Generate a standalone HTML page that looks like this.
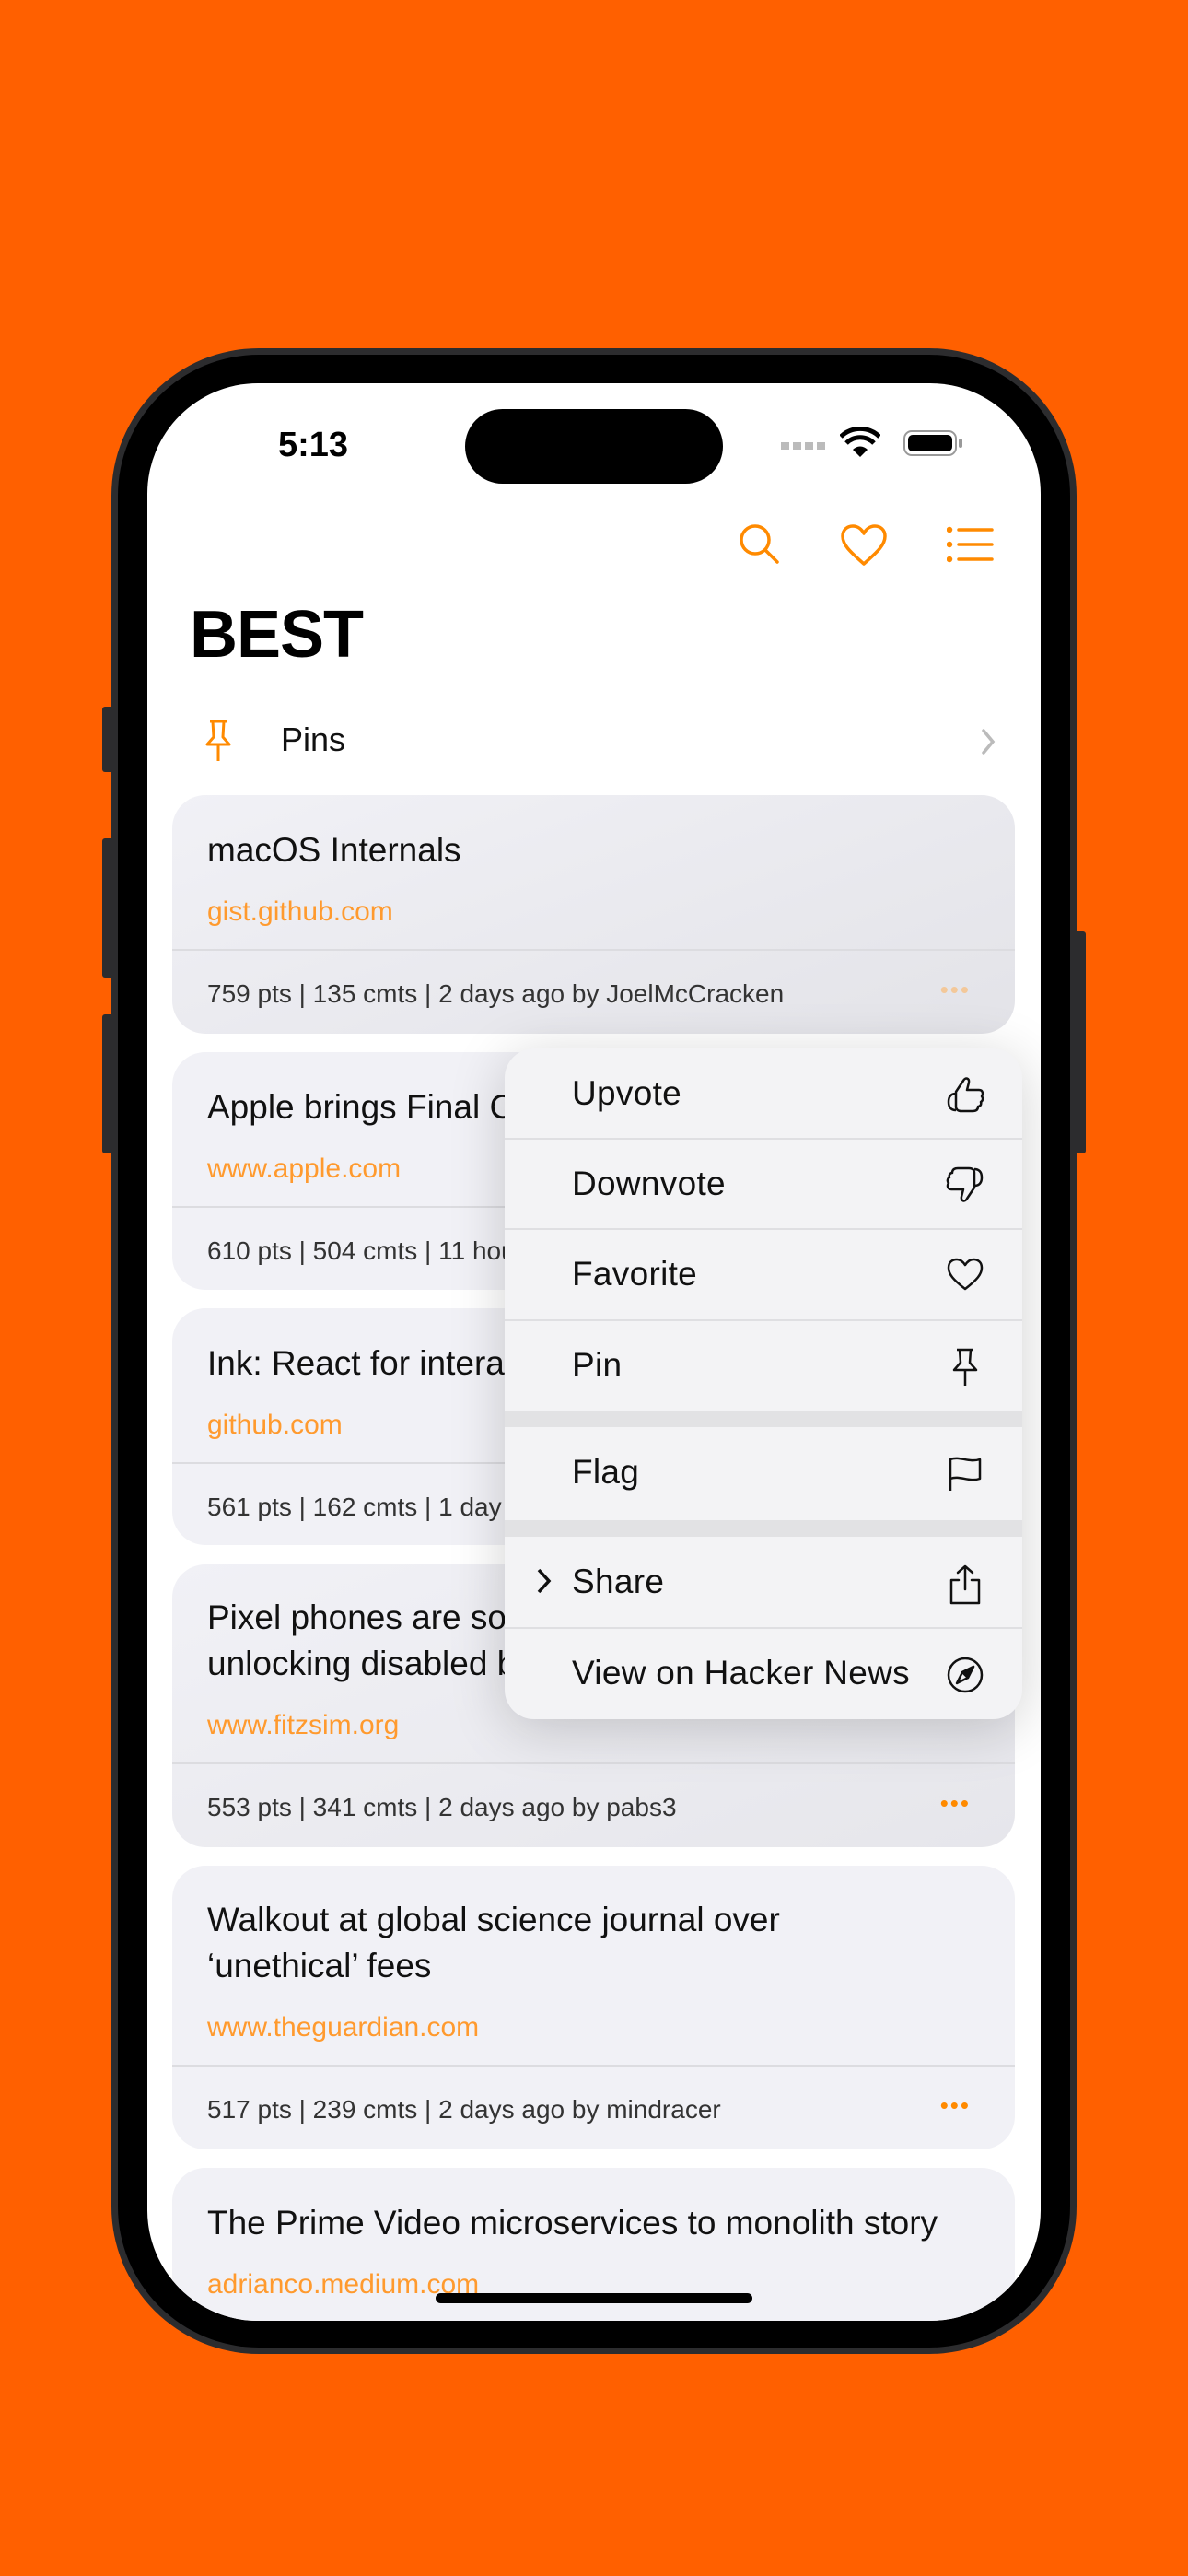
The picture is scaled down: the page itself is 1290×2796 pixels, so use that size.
<!DOCTYPE html>
<html><head><meta charset="utf-8"><style>
*{margin:0;padding:0;box-sizing:border-box}
body{width:1290px;height:2796px;background:#ff6000;position:relative;overflow:hidden;font-family:"Liberation Sans",sans-serif}
.abs{position:absolute}
.frame{left:121px;top:378px;width:1048px;height:2177px;border-radius:160px;background:#2c2c2e;}
.bezel{left:128px;top:385px;width:1034px;height:2163px;border-radius:153px;background:#000;}
.screen{left:160px;top:416px;width:970px;height:2103px;border-radius:120px;background:#fff;overflow:hidden}
.btn{background:#2c2c2e;border-radius:3px}
.card{position:absolute;left:27px;width:915px;background:#f1f1f6;border-radius:36px;overflow:hidden}
.t{position:absolute;left:38px;font-size:37px;color:#111;white-space:nowrap;line-height:50px}
.d{position:absolute;left:38px;font-size:30px;color:#ff9a2e;white-space:nowrap}
.m{position:absolute;left:38px;font-size:28px;color:#333;white-space:nowrap}
.hr{position:absolute;left:0;right:0;height:2px;background:#dcdce0}
.dots{position:absolute;right:48px;color:#ff8a00;font-size:26px;letter-spacing:2px}
.menu{position:absolute;left:388px;top:722px;width:562px;height:728px;background:#f3f3f5;border-radius:32px;overflow:hidden;box-shadow:0 10px 60px rgba(0,0,0,.18)}
.row{position:absolute;left:0;right:0;height:98px}
.row span{position:absolute;left:73px;top:28px;font-size:37px;color:#111;letter-spacing:0.3px}
.row svg{position:absolute;left:478px;top:29px}
.sep{position:absolute;left:0;right:0;height:2px;background:#dfdfe2}
.gap{position:absolute;left:0;right:0;height:18px;background:#e2e2e4}
</style></head><body>
<div class="abs btn" style="left:111px;top:767px;width:12px;height:71px"></div>
<div class="abs btn" style="left:111px;top:910px;width:12px;height:151px"></div>
<div class="abs btn" style="left:111px;top:1101px;width:12px;height:151px"></div>
<div class="abs btn" style="left:1167px;top:1011px;width:12px;height:241px"></div>
<div class="abs frame"></div>
<div class="abs bezel"></div>
<div class="abs screen">
  <div class="abs" style="left:345px;top:28px;width:280px;height:81px;border-radius:41px;background:#000"></div>
  <div class="abs" style="left:142px;top:46px;font-size:38px;font-weight:bold;color:#000">5:13</div>
  <div class="abs" style="left:688px;top:64px;width:50px;height:8px;background:repeating-linear-gradient(90deg,#bbb 0 9px,transparent 9px 13px)"></div>
  <svg class="abs" style="left:752px;top:48px" width="44" height="34" viewBox="0 0 44 34"><path d="M22 32 L14 24 A11 11 0 0 1 30 24 Z" fill="#000"/><path d="M7 17 A21 21 0 0 1 37 17" stroke="#000" stroke-width="5" fill="none"/><path d="M1 10 A30 30 0 0 1 43 10" stroke="#000" stroke-width="5" fill="none"/></svg>
  <div class="abs" style="left:821px;top:51px;width:58px;height:28px;border:2.5px solid #999;border-radius:9px;padding:3px"><div style="width:100%;height:100%;background:#000;border-radius:5px"></div></div>
  <div class="abs" style="left:881px;top:60px;width:4px;height:10px;background:#999;border-radius:2px"></div>
  <svg class="abs" style="left:640px;top:150px" width="50" height="50" viewBox="0 0 50 50" fill="none" stroke="#ff8a00" stroke-width="3.5" stroke-linecap="round"><circle cx="20" cy="20" r="15"/><path d="M31 31 L44 44"/></svg>
  <svg class="abs" style="left:752px;top:152px" width="52" height="48" viewBox="0 0 52 48" fill="none" stroke="#ff8a00" stroke-width="3.5" stroke-linejoin="round"><path d="M26 44 C10 30 3 23 3 14 C3 7 8 3 14 3 C20 3 24 7 26 11 C28 7 32 3 38 3 C44 3 49 7 49 14 C49 23 42 30 26 44 Z"/></svg>
  <svg class="abs" style="left:868px;top:155px" width="52" height="40" viewBox="0 0 52 40" fill="none" stroke="#ff8a00" stroke-width="3.5" stroke-linecap="round"><circle cx="3" cy="4" r="1.5" fill="#ff8a00"/><circle cx="3" cy="20" r="1.5" fill="#ff8a00"/><circle cx="3" cy="36" r="1.5" fill="#ff8a00"/><path d="M13 4H49M13 20H49M13 36H49"/></svg>
  <div class="abs" style="left:46px;top:232px;font-size:72px;font-weight:bold;color:#000;letter-spacing:-1px">BEST</div>
  <svg class="abs" style="left:62px;top:364px" width="30" height="48" viewBox="0 0 30 48" fill="none" stroke="#ff8a00" stroke-width="3" stroke-linejoin="round"><path d="M6 3H24M9 3L10 20L3 28H27L20 20L21 3M15 28V46"/></svg>
  <div class="abs" style="left:145px;top:366px;font-size:36px;color:#111">Pins</div>
  <svg class="abs" style="left:904px;top:374px" width="18" height="30" viewBox="0 0 18 30" fill="none" stroke="#bbb" stroke-width="3.5" stroke-linecap="round"><path d="M4 3L14 15L4 27"/></svg>

  <div class="card" style="top:447px;height:259px;background:linear-gradient(160deg,#f1f1f6,#e3e3e8)">
    <div class="t" style="top:35px">macOS Internals</div>
    <div class="d" style="top:110px">gist.github.com</div>
    <div class="hr" style="top:167px"></div>
    <div class="m" style="top:200px">759 pts | 135 cmts | 2 days ago by JoelMcCracken</div>
    <div class="dots" style="top:196px;color:#f3c89a">•••</div>
  </div>
  <div class="card" style="top:726px;height:258px">
    <div class="t" style="top:35px">Apple brings Final Cut Pro and Logic Pro to iPad</div>
    <div class="d" style="top:110px">www.apple.com</div>
    <div class="hr" style="top:167px"></div>
    <div class="m" style="top:200px">610 pts | 504 cmts | 11 hours ago by ...</div>
  </div>
  <div class="card" style="top:1004px;height:257px">
    <div class="t" style="top:35px">Ink: React for interactive command-line apps</div>
    <div class="d" style="top:110px">github.com</div>
    <div class="hr" style="top:167px"></div>
    <div class="m" style="top:200px">561 pts | 162 cmts | 1 day ago by ...</div>
  </div>
  <div class="card" style="top:1282px;height:307px;background:linear-gradient(160deg,#f1f1f6,#e6e6eb)">
    <div class="t" style="top:33px">Pixel phones are so bad</div>
    <div class="t" style="top:83px">unlocking disabled by default</div>
    <div class="d" style="top:158px">www.fitzsim.org</div>
    <div class="hr" style="top:215px"></div>
    <div class="m" style="top:248px">553 pts | 341 cmts | 2 days ago by pabs3</div>
    <div class="dots" style="top:244px">•••</div>
  </div>
  <div class="card" style="top:1609px;height:308px">
    <div class="t" style="top:34px">Walkout at global science journal over</div>
    <div class="t" style="top:84px">‘unethical’ fees</div>
    <div class="d" style="top:159px">www.theguardian.com</div>
    <div class="hr" style="top:216px"></div>
    <div class="m" style="top:249px">517 pts | 239 cmts | 2 days ago by mindracer</div>
    <div class="dots" style="top:245px">•••</div>
  </div>
  <div class="card" style="top:1937px;height:300px">
    <div class="t" style="top:35px">The Prime Video microservices to monolith story</div>
    <div class="d" style="top:110px">adrianco.medium.com</div>
  </div>
  <div class="abs" style="left:313px;top:2073px;width:344px;height:11px;border-radius:6px;background:#000"></div>

  <div class="menu">
    <div class="row" style="top:0"><span>Upvote</span>
      <svg width="44" height="42" viewBox="0 0 44 42" fill="none" stroke="#111" stroke-width="2.5" stroke-linejoin="round"><path d="M12 18 L20 6 C22 2 27 3 26 8 L24 16 H37 C41 16 42 20 40 23 C42 25 41 28 39 29 C40 32 38 34 36 34 C36 38 33 39 30 39 H18 C14 39 12 37 12 34 Z M12 20 C6 20 4 24 4 29 C4 35 7 38 12 38"/></svg></div>
    <div class="sep" style="top:97px"></div>
    <div class="row" style="top:98px"><span>Downvote</span>
      <svg width="44" height="42" viewBox="0 0 44 42" fill="none" stroke="#111" stroke-width="2.5" stroke-linejoin="round"><path d="M32 24 L24 36 C22 40 17 39 18 34 L20 26 H7 C3 26 2 22 4 19 C2 17 3 14 5 13 C4 10 6 8 8 8 C8 4 11 3 14 3 H26 C30 3 32 5 32 8 Z M32 22 C38 22 40 18 40 13 C40 7 37 4 32 4"/></svg></div>
    <div class="sep" style="top:195px"></div>
    <div class="row" style="top:196px"><span>Favorite</span>
      <svg width="44" height="40" viewBox="0 0 44 40" fill="none" stroke="#111" stroke-width="2.5" stroke-linejoin="round"><path d="M22 36 C9 26 4 20 4 13 C4 7 8 4 13 4 C17 4 20 7 22 10 C24 7 27 4 31 4 C36 4 40 7 40 13 C40 20 35 26 22 36 Z"/></svg></div>
    <div class="sep" style="top:294px"></div>
    <div class="row" style="top:295px"><span>Pin</span>
      <svg width="44" height="44" viewBox="0 0 44 44" fill="none" stroke="#111" stroke-width="2.5" stroke-linejoin="round"><path d="M13 3H31M16 3L17 17L10 25H34L27 17L28 3M22 25V42"/></svg></div>
    <div class="gap" style="top:393px"></div>
    <div class="row" style="top:411px"><span>Flag</span>
      <svg width="44" height="44" viewBox="0 0 44 44" fill="none" stroke="#111" stroke-width="2.5" stroke-linejoin="round"><path d="M6 40V6 C16 2 26 10 38 6 V27 C26 31 16 23 6 27"/></svg></div>
    <div class="gap" style="top:512px"></div>
    <div class="row" style="top:530px"><svg style="left:33px;top:33px" width="20" height="30" viewBox="0 0 20 30" fill="none" stroke="#111" stroke-width="3.5"><path d="M4 3L15 15L4 27"/></svg><span>Share</span>
      <svg width="44" height="46" viewBox="0 0 44 46" fill="none" stroke="#111" stroke-width="2.5" stroke-linejoin="round" stroke-linecap="round"><path d="M22 28V3M14 10L22 3L30 10M15 18H7V43H37V18H29"/></svg></div>
    <div class="sep" style="top:628px"></div>
    <div class="row" style="top:629px"><span>View on Hacker News</span>
      <svg width="44" height="44" viewBox="0 0 44 44" fill="none" stroke="#111" stroke-width="2.5" stroke-linejoin="round"><circle cx="22" cy="22" r="18"/><path d="M31 13 L25 25 L13 31 L19 19 Z"/><path d="M31 13 L19 19 L25 25 Z" fill="#111"/></svg></div>
  </div>
</div>
</body></html>
